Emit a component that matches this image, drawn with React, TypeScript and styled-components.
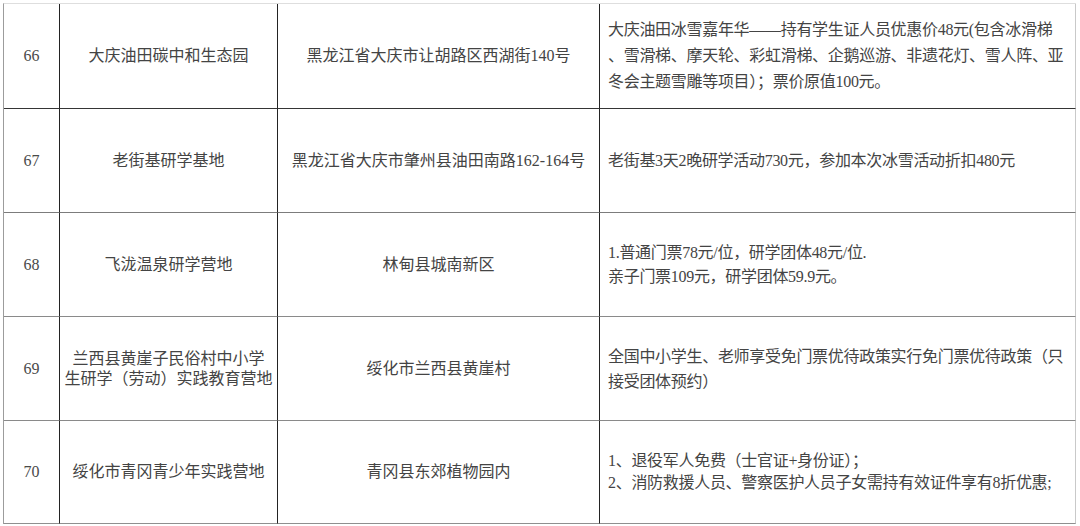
import React from "react";
import styled, { createGlobalStyle } from "styled-components";

const GlobalStyle = createGlobalStyle`
  html, body {
    margin: 0;
    padding: 0;
    background: #ffffff;
  }
  body {
    font-family: "Liberation Serif", "Noto Sans CJK SC", serif;
    color: #444444;
  }
`;

const Page = styled.div`
  width: 1080px;
  height: 526px;
  box-sizing: border-box;
  padding: 3px 0 0 3px;
  overflow: hidden;
`;

const Table = styled.div`
  display: grid;
  grid-template-columns: 56px 218px 322px 476px;
  grid-template-rows: 105px 104px 104px 104px 103px;
  width: max-content;
  border-top: 1px solid #dedede;
  border-left: 1px solid #9c9c9c;
`;

const Cell = styled.div<{ $rowLine: string }>`
  box-sizing: border-box;
  display: flex;
  flex-direction: column;
  justify-content: center;
  align-items: center;
  text-align: center;
  padding: 0 8px;
  font-size: 16px;
  white-space: nowrap;
  border-right: 1px solid #232323;
  border-bottom: 1px solid ${(p) => p.$rowLine};
`;

const NumCell = styled(Cell)`
  padding: 0;
  color: #4a4a4a;
`;

const NameCell = styled(Cell)`
  line-height: 20px;
`;

const AddressCell = styled(Cell)`
  line-height: 22px;
`;

const NoteCell = styled(Cell)<{ $lineHeight: number }>`
  align-items: flex-start;
  text-align: left;
  letter-spacing: -0.3px;
  line-height: ${(p) => p.$lineHeight}px;
  border-right-color: #c9c9c9;
`;

const Line = styled.span`
  display: block;
`;

interface Site {
  no: string;
  name: string[];
  address: string;
  note: string[];
  line: string;
  noteLineHeight: number;
}

const sites: Site[] = [
  {
    no: "66",
    name: ["大庆油田碳中和生态园"],
    address: "黑龙江省大庆市让胡路区西湖街140号",
    note: [
      "大庆油田冰雪嘉年华——持有学生证人员优惠价48元(包含冰滑梯",
      "、雪滑梯、摩天轮、彩虹滑梯、企鹅巡游、非遗花灯、雪人阵、亚",
      "冬会主题雪雕等项目）；票价原值100元。",
    ],
    line: "#353535",
    noteLineHeight: 26,
  },
  {
    no: "67",
    name: ["老街基研学基地"],
    address: "黑龙江省大庆市肇州县油田南路162-164号",
    note: ["老街基3天2晚研学活动730元，参加本次冰雪活动折扣480元"],
    line: "#7c7c7c",
    noteLineHeight: 25,
  },
  {
    no: "68",
    name: ["飞泷温泉研学营地"],
    address: "林甸县城南新区",
    note: ["1.普通门票78元/位，研学团体48元/位.", "亲子门票109元，研学团体59.9元。"],
    line: "#8a8a8a",
    noteLineHeight: 24,
  },
  {
    no: "69",
    name: ["兰西县黄崖子民俗村中小学", "生研学（劳动）实践教育营地"],
    address: "绥化市兰西县黄崖村",
    note: ["全国中小学生、老师享受免门票优待政策实行免门票优待政策（只", "接受团体预约）"],
    line: "#8a8a8a",
    noteLineHeight: 25,
  },
  {
    no: "70",
    name: ["绥化市青冈青少年实践营地"],
    address: "青冈县东郊植物园内",
    note: ["1、退役军人免费（士官证+身份证）；", "2、消防救援人员、警察医护人员子女需持有效证件享有8折优惠;"],
    line: "#8f8f8f",
    noteLineHeight: 22,
  },
];

export default function App() {
  return (
    <>
      <GlobalStyle />
      <Page>
        <Table>
          {sites.map((site) => (
            <React.Fragment key={site.no}>
              <NumCell $rowLine={site.line}>{site.no}</NumCell>
              <NameCell $rowLine={site.line}>
                {site.name.map((text) => (
                  <Line key={text}>{text}</Line>
                ))}
              </NameCell>
              <AddressCell $rowLine={site.line}>{site.address}</AddressCell>
              <NoteCell $rowLine={site.line} $lineHeight={site.noteLineHeight}>
                {site.note.map((text) => (
                  <Line key={text}>{text}</Line>
                ))}
              </NoteCell>
            </React.Fragment>
          ))}
        </Table>
      </Page>
    </>
  );
}
